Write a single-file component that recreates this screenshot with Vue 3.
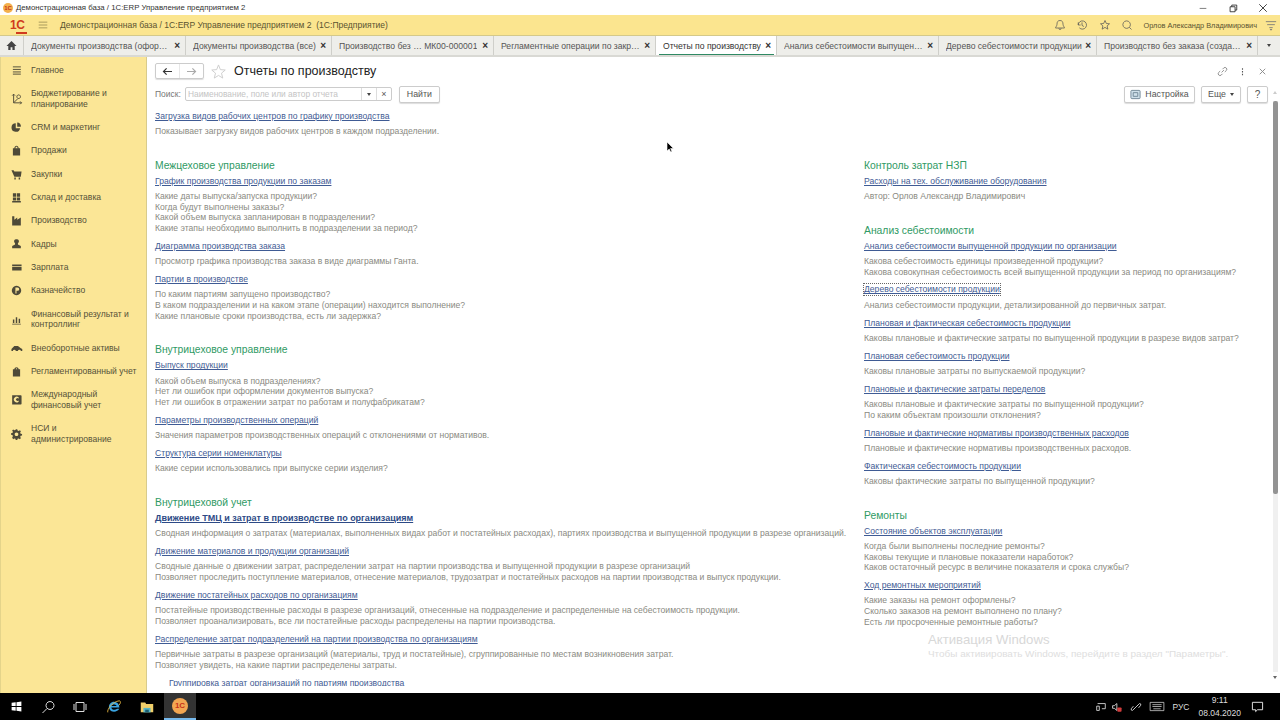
<script setup>
const tabs = [
  { t: 'Документы производства (офор…', w: 162 },
  { t: 'Документы производства (все)', w: 146 },
  { t: 'Производство без … МК00-000001', w: 162 },
  { t: 'Регламентные операции по закр…', w: 162 },
  { t: 'Отчеты по производству', w: 121, active: true },
  { t: 'Анализ себестоимости выпущен…', w: 162 },
  { t: 'Дерево себестоимости продукции', w: 158 },
  { t: 'Производство без заказа (созда…', w: 161 },
]
const menu = [
  { t: ['Главное'], i: 'M4 4h11M4 7.500h11M4 11h11M4 14h11', s: true },
  { t: ['Бюджетирование и', 'планирование'], i: 'M5 3v12h11M3 5l2-2 2 2M14 13l2 2-2 2M5 15l6-6M12 4a2.500 2.500 0 1 0 .01 0', s: true },
  { t: ['CRM и маркетинг'], i: 'M8 3a6 6 0 1 0 6 7H8zM10 2a5 5 0 0 1 5 6h-5z' },
  { t: ['Продажи'], i: 'M4 6h10v10H4zM6 6c0-5 6-5 6 0h-1.500c0-3-3-3-3 0z' },
  { t: ['Закупки'], i: 'M2 3h3l1 2h10l-1 7H6zM6 13h2v3H6zM12 13h2v3h-2z' },
  { t: ['Склад и доставка'], i: 'M4 3h4.500v5H4zM9.500 3H14v5H9.500zM4 9h4.500v4H4zM9.500 9H14v4H9.500zM3 14h12v2H3z' },
  { t: ['Производство'], i: 'M3 3h3v5l4-3v3l5-3v11H3z' },
  { t: ['Кадры'], i: 'M9 3a3 3 0 0 1 2 5.500v2l4 2v3H3v-3l4-2v-2A3 3 0 0 1 9 3z' },
  { t: ['Зарплата'], i: 'M3 5h13v2H3zM3 8h13v5H3z' },
  { t: ['Казначейство'], i: 'M9 2.500a6.500 6.500 0 1 0 .01 0zM7.500 5h3a2 2 0 0 1 0 4.500H9v3.500H7.500z' },
  { t: ['Финансовый результат и', 'контроллинг'], i: 'M4 9h2v5H4zM8 6h2v8H8zM12 8h2v6h-2zM3 15h12v1H3z' },
  { t: ['Внеоборотные активы'], i: 'M2 11l4-4h5l4 3 2 1v3h-2a2 2 0 0 0-4 0H8a2 2 0 0 0-4 0H2z' },
  { t: ['Регламентированный учет'], i: 'M6 6c0-4 6-4 6 0h2v10H4V6zM8 6h2c0-2-2-2-2 0z' },
  { t: ['Международный', 'финансовый учет'], i: 'M3 3h12a1 1 0 0 1 1 1v11a1 1 0 0 1-1 1H3zM12 6a4 4 0 1 0 0 6v-2a2 2 0 1 1 0-2z' },
  { t: ['НСИ и', 'администрирование'], i: 'M8 3h2l.5 2 1.500.6 1.700-1 1.400 1.400-1 1.700.6 1.500 2 .5v2l-2 .5-.6 1.500 1 1.700-1.400 1.400-1.700-1-1.500.6-.5 2H8l-.5-2-1.500-.6-1.700 1L3 14.400l1-1.700-.6-1.500-2-.5v-2l2-.5.6-1.500-1-1.700L4.400 3.600l1.700 1 1.500-.6zM9 7.500a2.500 2.500 0 1 0 .01 0z' },
]
const top = { l: 'Загрузка видов рабочих центров по графику производства', d: ['Показывает загрузку видов рабочих центров в каждом подразделении.'] }
const left = [
  { h: 'Межцеховое управление', items: [
    { l: 'График производства продукции по заказам', d: ['Какие даты выпуска/запуска продукции?', 'Когда будут выполнены заказы?', 'Какой объем выпуска запланирован в подразделении?', 'Какие этапы необходимо выполнить в подразделении за период?'] },
    { l: 'Диаграмма производства заказа', d: ['Просмотр графика производства заказа в виде диаграммы Ганта.'] },
    { l: 'Партии в производстве', d: ['По каким партиям запущено производство?', 'В каком подразделении и на каком этапе (операции) находится выполнение?', 'Какие плановые сроки производства, есть ли задержка?'] },
  ] },
  { h: 'Внутрицеховое управление', items: [
    { l: 'Выпуск продукции', d: ['Какой объем выпуска в подразделениях?', 'Нет ли ошибок при оформлении документов выпуска?', 'Нет ли ошибок в отражении затрат по работам и полуфабрикатам?'] },
    { l: 'Параметры производственных операций', d: ['Значения параметров производственных операций с отклонениями от нормативов.'] },
    { l: 'Структура серии номенклатуры', d: ['Какие серии использовались при выпуске серии изделия?'] },
  ] },
  { h: 'Внутрицеховой учет', items: [
    { l: 'Движение ТМЦ и затрат в производстве по организациям', bold: true, d: ['Сводная информация о затратах (материалах, выполненных видах работ и постатейных расходах), партиях производства и выпущенной продукции в разрезе организаций.'] },
    { l: 'Движение материалов и продукции организаций', d: ['Сводные данные о движении затрат, распределении затрат на партии производства и выпущенной продукции в разрезе организаций', 'Позволяет проследить поступление материалов, отнесение материалов, трудозатрат и постатейных расходов на партии производства и выпуск продукции.'] },
    { l: 'Движение постатейных расходов по организациям', d: ['Постатейные производственные расходы в разрезе организаций, отнесенные на подразделение и распределенные на себестоимость продукции.', 'Позволяет проанализировать, все ли постатейные расходы распределены на партии производства.'] },
    { l: 'Распределение затрат подразделений на партии производства по организациям', d: ['Первичные затраты в разрезе организаций (материалы, труд и постатейные), сгруппированные по местам возникновения затрат.', 'Позволяет увидеть, на какие партии распределены затраты.'] },
    { l: 'Группировка затрат организаций по партиям производства', sub: true, d: [] },
  ] },
]
const right = [
  { h: 'Контроль затрат НЗП', items: [
    { l: 'Расходы на тех. обслуживание оборудования', d: ['Автор: Орлов Александр Владимирович'] },
  ] },
  { h: 'Анализ себестоимости', items: [
    { l: 'Анализ себестоимости выпущенной продукции по организации', d: ['Какова себестоимость единицы произведенной продукции?', 'Какова совокупная себестоимость всей выпущенной продукции за период по организациям?'] },
    { l: 'Дерево себестоимости продукции', focus: true, d: ['Анализ себестоимости продукции, детализированной до первичных затрат.'] },
    { l: 'Плановая и фактическая себестоимость продукции', d: ['Каковы плановые и фактические затраты по выпущенной продукции в разрезе видов затрат?'] },
    { l: 'Плановая себестоимость продукции', d: ['Каковы плановые затраты по выпускаемой продукции?'] },
    { l: 'Плановые и фактические затраты переделов', d: ['Каковы плановые и фактические затраты по выпущенной продукции?', 'По каким объектам произошли отклонения?'] },
    { l: 'Плановые и фактические нормативы производственных расходов', d: ['Плановые и фактические нормативы производственных расходов.'] },
    { l: 'Фактическая себестоимость продукции', d: ['Каковы фактические затраты по выпущенной продукции?'] },
  ] },
  { h: 'Ремонты', items: [
    { l: 'Состояние объектов эксплуатации', d: ['Когда были выполнены последние ремонты?', 'Каковы текущие и плановые показатели наработок?', 'Каков остаточный ресурс в величине показателя и срока службы?'] },
    { l: 'Ход ремонтных мероприятий', d: ['Какие заказы на ремонт оформлены?', 'Сколько заказов на ремонт выполнено по плану?', 'Есть ли просроченные ремонтные работы?'] },
  ] },
]
</script>

<template>
  <div class="app">
    <header class="title">
      <span class="t-logo">1С</span>
      <span class="t-text">Демонстрационная база / 1С:ERP Управление предприятием 2</span>
      <span class="spring"></span>
      <svg class="win" viewBox="0 0 12 12"><path d="M2 6.500h8" stroke="#666" fill="none"/></svg>
      <svg class="win" viewBox="0 0 12 12"><path d="M2.500 4.500h6v6h-6zM4.500 4.500v-2h6v6h-2" stroke="#222" fill="none"/></svg>
      <svg class="win" viewBox="0 0 12 12"><path d="M1.500 1.500l9 9M10.500 1.500l-9 9" stroke="#222" fill="none"/></svg>
    </header>

    <div class="ybar">
      <span class="logo1c">1<i>С</i></span>
      <svg class="burger" viewBox="0 0 14 12"><path d="M1 2h12M1 6h12M1 10h12" stroke="#8a7f4a" stroke-width="1" fill="none"/></svg>
      <span class="y-text">Демонстрационная база / 1С:ERP Управление предприятием 2&nbsp; (1С:Предприятие)</span>
      <span class="spring"></span>
      <svg class="y-ic" viewBox="0 0 16 16"><path d="M8 2c-3 0-4 2-4 5 0 2-2 4-2 5h12c0-1-2-3-2-5 0-3-1-5-4-5zM6.500 12.500a1.500 1.500 0 0 0 3 0" stroke="#555" fill="none"/></svg>
      <svg class="y-ic" viewBox="0 0 16 16"><path d="M3 8a5.500 5.500 0 1 1 1.500 3.800M3 4.500V8h3.200M8 4.500V8.500l2.500 1.500" stroke="#555" fill="none"/></svg>
      <svg class="y-ic" viewBox="0 0 16 16"><path d="M8 2l1.800 4 4.200.4-3.200 2.800 1 4.300L8 11.200l-3.800 2.300 1-4.300L2 6.400 6.200 6z" stroke="#555" fill="none"/></svg>
      <svg class="y-ic srch" viewBox="0 0 16 16"><path d="M7.500 2.500a5 5 0 1 0 .01 0zM11 11l3 3" stroke="#555" fill="none"/></svg>
      <span class="y-user">Орлов Александр Владимирович</span>
      <svg class="y-menu" viewBox="0 0 14 12"><path d="M1 1.500h12M2.500 5h9M5 8.500h4" stroke="#777" fill="none"/><path d="M5.500 10h3L7 12z" fill="#777"/></svg>
    </div>

    <nav class="tabs">
      <div class="home">
        <svg viewBox="0 0 12 12"><path d="M6 1L.5 6.500H2.500V11h2.500V8h2v3h2.500V6.500h2z" fill="#444"/></svg>
      </div>
      <div v-for="tab in tabs" :key="tab.t" class="tab" :class="{ active: tab.active }" :style="{ width: tab.w + 'px' }">
        <span class="tab-t">{{ tab.t }}</span>
        <span class="tab-x">×</span>
      </div>
      <div class="tab-more"><i></i></div>
    </nav>

    <div class="body">
      <aside class="side">
        <div v-for="m in menu" :key="m.t[0]" class="mi" :class="{ two: m.t.length > 1 }">
          <svg class="mi-ic" viewBox="0 0 18 18">
            <path :d="m.i" :fill="m.s ? 'none' : '#4e4a38'" :stroke="m.s ? '#4e4a38' : 'none'" fill-rule="evenodd" :stroke-width="m.s ? 1.300 : 0" />
          </svg>
          <div class="mi-t">
            <div v-for="line in m.t" :key="line">{{ line }}</div>
          </div>
        </div>
      </aside>

      <main class="main">
        <div class="head">
          <div class="nav-btns">
            <span class="nb"><svg viewBox="0 0 12 10"><path d="M11 5H2M5 1.500L1.500 5 5 8.500" stroke="#333" stroke-width="1.300" fill="none"/></svg></span>
            <span class="nb"><svg viewBox="0 0 12 10"><path d="M1 5h9M7 1.500L10.500 5 7 8.500" stroke="#aaa" stroke-width="1.300" fill="none"/></svg></span>
          </div>
          <svg class="star" viewBox="0 0 16 16"><path d="M8 1l2 5 5.200.4-4 3.400 1.300 5.200L8 12.200 3.500 15l1.300-5.200-4-3.400L6 6z" stroke="#ccc" fill="none"/></svg>
          <h1>Отчеты по производству</h1>
          <span class="spring"></span>
          <svg class="h-ic" viewBox="0 0 12 12"><path d="M5 7l2.500-2.500M6 3.500l1.500-1.500a2 2 0 0 1 2.800 2.800L8.500 6.500M6 8.500L4.500 10A2 2 0 0 1 1.700 7.200L3.500 5.500" stroke="#888" fill="none"/></svg>
          <svg class="h-ic" viewBox="0 0 12 12"><path d="M6 2.500v1.500M6 5.500v1.500M6 8.500v1.500" stroke="#555" stroke-width="1.200" fill="none"/></svg>
          <svg class="h-ic" viewBox="0 0 12 12"><path d="M3 3l6 6M9 3l-6 6" stroke="#888" fill="none"/></svg>
        </div>

        <div class="search">
          <span class="s-label">Поиск:</span>
          <div class="s-box">
            <span class="s-ph">Наименование, поле или автор отчета</span>
            <span class="s-btn"><i class="arrow"></i></span>
            <span class="s-btn x">×</span>
          </div>
          <button class="btn find">Найти</button>
          <span class="spring"></span>
          <button class="btn nast">
            <svg viewBox="0 0 12 12"><rect x="1" y="1.500" width="10" height="9" rx="1" fill="#cfe0ea" stroke="#6e8494"/><path d="M3.500 4h5v4h-5z" fill="none" stroke="#6e8494"/></svg>
            Настройка
          </button>
          <button class="btn more">Еще <i class="arrow"></i></button>
          <button class="btn help">?</button>
        </div>

        <div class="scroll-wrap">
          <div class="content">
            <div class="item first">
              <a class="link">{{ top.l }}</a>
              <div class="desc"><div v-for="d in top.d" :key="d">{{ d }}</div></div>
            </div>
            <div class="cols">
              <div class="col">
                <section v-for="s in left" :key="s.h" class="sec">
                  <h2>{{ s.h }}</h2>
                  <div v-for="it in s.items" :key="it.l" class="item" :class="{ sub: it.sub }">
                    <a class="link" :class="{ bold: it.bold }">{{ it.l }}</a>
                    <div v-if="it.d.length" class="desc"><div v-for="d in it.d" :key="d">{{ d }}</div></div>
                  </div>
                </section>
              </div>
              <div class="col">
                <section v-for="s in right" :key="s.h" class="sec">
                  <h2>{{ s.h }}</h2>
                  <div v-for="it in s.items" :key="it.l" class="item">
                    <a class="link" :class="{ focus: it.focus }">{{ it.l }}</a>
                    <div class="desc"><div v-for="d in it.d" :key="d">{{ d }}</div></div>
                  </div>
                </section>
              </div>
            </div>
          </div>
          <div class="activate">
            <div class="a1">Активация Windows</div>
            <div class="a2">Чтобы активировать Windows, перейдите в раздел "Параметры".</div>
          </div>
        </div>

        <div class="sbar">
          <i class="sb-up"></i>
          <div class="sb-track"><i class="sb-thumb"></i></div>
          <i class="sb-down"></i>
        </div>
        <svg class="cursor" viewBox="0 0 8 12"><path d="M1 1v9l2.200-2 1.500 3 1.300-.6L4.600 7.500H7.500z" fill="#000" stroke="#fff" stroke-width=".6"/></svg>
      </main>
    </div>

    <footer class="task">
      <svg class="ti win-logo" viewBox="0 0 16 16"><path d="M2 3.500l5-.7v4.700H2zM8 2.700l6-.9v5.700H8zM2 8.500h5v4.700l-5-.7zM8 8.500h6v5.700l-6-.9z" fill="#fff"/></svg>
      <svg class="ti" viewBox="0 0 16 16"><path d="M10 2.500a4 4 0 1 0 .01 0zM7 9.500l-4.500 4.500" stroke="#ddd" fill="none"/></svg>
      <svg class="ti" viewBox="0 0 16 16"><path d="M4 3.500h8v9H4zM2 5v6M14 5v6" stroke="#ddd" fill="none"/></svg>
      <svg class="ti ie" viewBox="0 0 18 18"><path d="M9 3a6 6 0 0 1 6 6.500H6c.2 3 4.500 3.500 6.500 1.500H15c-2 4-10 5-11.500-1C2.500 6 6 3 9 3zM6 8h6c-.3-2.500-5.500-2.500-6 0z" fill="#3aa3e0" fill-rule="evenodd"/><path d="M2 15C1 12 7 3 15 2c2 .5 1.500 3-.5 5" stroke="#e8b840" fill="none"/></svg>
      <svg class="ti folder" viewBox="0 0 18 18"><path d="M2 4h5l1 1.500h8V15H2z" fill="#f1cf6a"/><path d="M5 10h8v5H5z" fill="#58b6c8"/><path d="M7 12h4v3H7z" fill="#1d5f72"/></svg>
      <div class="ti-active">
        <span class="od">1С</span>
      </div>
      <span class="spring"></span>
      <svg class="tr net" viewBox="0 0 14 14"><path d="M3 3h9v6H8M2 6h3v5H2z" stroke="#ddd" fill="none"/></svg>
      <svg class="tr vol" viewBox="0 0 14 14"><path d="M3 5.500h2L8 3v8L5 8.500H3z" stroke="#ddd" fill="none"/><rect x="8.500" y="7.500" width="5" height="5" rx="1" fill="#d23c3c"/></svg>
      <svg class="tr lnk" viewBox="0 0 14 14"><path d="M8 6l3-3a1.500 1.500 0 0 1 1.500 2L10 8M6 8l-3 3a1.500 1.500 0 0 1-1.500-2L4 6M5 9l4-4" stroke="#ddd" fill="none"/></svg>
      <svg class="tr kb" viewBox="0 0 16 12"><path d="M.5 1.500h15v9H.5zM3 4h10M3 6h10M4 8.500h8" stroke="#ddd" stroke-width=".8" fill="none"/></svg>
      <span class="lang">РУС</span>
      <div class="clock"><div>9:11</div><div>08.04.2020</div></div>
      <svg class="tr note" viewBox="0 0 14 14"><path d="M1.500 2.500h11v8H7L5 12.500V10.500H1.500z" stroke="#eee" fill="none"/></svg>
    </footer>
  </div>
</template>

<style>
html, body { margin: 0; background: #fff; overflow: hidden; }
</style>

<style scoped>
.app { width: 1280px; height: 720px; display: flex; flex-direction: column; overflow: hidden; font-family: "Liberation Sans", Arial, sans-serif; font-size: 9px; color: #444; background: #fff; }
.spring { flex: 1; }

.title { height: 15px; display: flex; align-items: center; padding-left: 3px; background: #fff; flex: none; }
.t-logo { width: 10px; height: 10px; margin-right: 3px; border-radius: 50%; background: #f3b04c; color: #c8321a; font-size: 6px; font-weight: 700; line-height: 10px; text-align: center; }
.t-text { font-size: 7.800px; color: #333; }
.win { width: 10px; height: 10px; margin-right: 20px; }
.win:last-child { margin-right: 12px; }

.ybar { height: 21px; flex: none; background: #fbe58f; display: flex; align-items: center; border-bottom: 1px solid #d4c98a; box-sizing: border-box; }
.logo1c { font-size: 12px; font-weight: 700; color: #d03a1e; margin-left: 10px; width: 19px; letter-spacing: -.5px; }
.logo1c i { font-style: normal; border-bottom: 2px solid #d03a1e; padding-right: 3px; }
.burger { width: 10px; height: 10px; margin-left: 9px; }
.y-text { margin-left: 12px; font-size: 8.550px; color: #5a5330; }
.y-ic { width: 12px; height: 12px; margin-right: 10.500px; }
.y-ic.srch { margin-right: 10px; }
.y-user { font-size: 7.350px; color: #5a5330; margin-right: 8px; }
.y-menu { width: 12px; height: 11px; margin-right: 3px; }

.tabs { height: 21px; flex: none; background: #eeeeea; display: flex; border-bottom: 2px solid #d9d9d4; box-sizing: border-box; }
.home { width: 24px; display: flex; align-items: center; justify-content: center; border-right: 1px solid #cfcfca; box-sizing: border-box; }
.home svg { width: 11px; height: 11px; }
.tab { flex: none; box-sizing: border-box; border-right: 1px solid #cfcfca; display: flex; align-items: center; padding: 0 5px 0 7px; justify-content: space-between; position: relative; }
.tab-t { font-size: 8.600px; color: #555; white-space: nowrap; overflow: hidden; }
.tab-x { font-size: 10px; color: #333; font-weight: 700; line-height: 1; }
.tab.active { background: #fff; }
.tab.active::after { content: ""; position: absolute; left: 3px; right: 2px; bottom: 0; height: 1.500px; background: #2f8a64; }
.tab.active .tab-t { color: #333; }
.tab-more { flex: 1; display: flex; align-items: center; justify-content: center; }
.arrow, .tab-more i { display: inline-block; width: 0; height: 0; border-left: 2.500px solid transparent; border-right: 2.500px solid transparent; border-top: 3px solid #444; }

.body { flex: 1; min-height: 0; display: flex; }
.side { width: 147px; flex: none; box-sizing: border-box; background: #fbe696; border-left: 1px solid #e4d48a; border-right: 1px solid #d8cb8c; padding-top: 1.500px; }
.mi { display: flex; align-items: center; height: 23.300px; }
.mi.two { height: 34px; }
.mi-ic { width: 13px; height: 13px; margin-left: 9px; margin-right: 8px; flex: none; }
.mi-t { font-size: 8.550px; line-height: 10.500px; color: #555138; }

.main { flex: 1; min-width: 0; display: flex; flex-direction: column; position: relative; }
.head { height: 28px; display: flex; align-items: center; padding: 0 12px 0 8px; flex: none; }
.nav-btns { display: flex; width: 49px; height: 16px; border: 1px solid #ccc; border-radius: 2px; box-sizing: border-box; box-shadow: 0 1px 1px #ddd; }
.nb { flex: 1; display: flex; align-items: center; justify-content: center; }
.nb + .nb { border-left: 1px solid #e8e8e8; }
.nb svg { width: 11px; height: 9px; }
.star { width: 15px; height: 15px; margin: 0 8px 0 7px; }
h1 { margin: 0; font-size: 12.500px; font-weight: 400; color: #222; }
.h-ic { width: 11px; height: 11px; margin-left: 9px; }

.search { height: 18px; display: flex; align-items: center; flex: none; padding: 0 12px 0 8px; }
.s-label { font-size: 8.500px; color: #777; margin-right: 4px; }
.s-box { width: 207px; height: 14px; border: 1px solid #ccc; border-radius: 2px; box-sizing: border-box; display: flex; align-items: center; }
.s-ph { flex: 1; font-size: 8.400px; color: #c4c4c4; padding-left: 2px; white-space: nowrap; }
.s-btn { width: 14px; height: 12px; display: flex; align-items: center; justify-content: center; border-left: 1px solid #ddd; font-size: 9px; color: #555; }
.btn { font-family: inherit; background: #fff; border: 1px solid #ccc; border-radius: 2px; height: 17px; padding: 0; box-shadow: 0 1px 1px #ddd; font-size: 8.800px; color: #555; display: flex; align-items: center; justify-content: center; }
.find { width: 41px; margin-left: 7px; }
.nast { width: 71px; gap: 4px; }
.nast svg { width: 11px; height: 11px; }
.more { width: 40px; margin-left: 6px; gap: 4px; }
.help { width: 21px; margin-left: 6px; font-size: 10px; }

.scroll-wrap { height: 583px; overflow: hidden; position: relative; flex: none; }
.content { padding: 4px 0 0 8px; }
.cols { display: flex; }
.col { width: 709px; flex: none; }
.col + .col { width: 400px; }
.sec { margin-top: 22.850px; }
h2 { margin: 0; font-size: 10.350px; line-height: 12px; font-weight: 400; color: #2f9a64; }
.item { margin-top: 4px; }
.item + .item { margin-top: 7.200px; }
.item.sub { padding-left: 14px; }
.link { display: inline-block; font-size: 8.600px; line-height: 11px; color: #3f5b94; text-decoration: underline; text-decoration-thickness: 1px; white-space: nowrap; }
.link.bold { font-size: 9px; font-weight: 700; color: #2d4a86; }
.link.focus { outline: 1px dotted #666; }
.desc { margin-top: 4.250px; font-size: 8.600px; line-height: 10.700px; color: #8a8a82; white-space: nowrap; }

.activate { position: absolute; left: 781px; top: 528.500px; white-space: nowrap; pointer-events: none; }
.a1 { font-size: 13.200px; color: #d8d8d8; line-height: 16px; }
.a2 { font-size: 9.950px; color: #dedede; line-height: 14px; margin-top: -1px; }

.sbar { position: absolute; right: 0; top: 34px; bottom: 14px; width: 10px; display: flex; flex-direction: column; align-items: center; }
.sb-up { width: 0; height: 0; border-left: 2px solid transparent; border-right: 2px solid transparent; border-bottom: 3px solid #ccc; }
.sb-track { flex: 1; width: 5px; background: #f0f0f0; margin: 7px 0 4px; }
.sb-thumb { display: block; width: 5px; height: 393px; background: #939393; border-radius: 2px; }
.sb-down { width: 0; height: 0; border-left: 2px solid transparent; border-right: 2px solid transparent; border-top: 3px solid #666; }
.cursor { position: absolute; left: 519px; top: 84px; width: 8px; height: 12px; }

.task { height: 27px; flex: none; background: #000; display: flex; align-items: center; color: #ddd; }
.ti { width: 16px; height: 16px; margin: 0 8px; }
.win-logo { width: 13px; height: 13px; margin: 0 9.500px; }
.ie { margin: 0 8px 0 10px; }
.folder { margin: 0 9px; }
.ti-active { width: 32px; height: 27px; background: #333; border-bottom: 2px solid #76b9ed; box-sizing: border-box; display: flex; align-items: center; justify-content: center; }
.od { width: 16px; height: 16px; border-radius: 50%; background: #f3a652; color: #c8321a; font-size: 8px; font-weight: 700; display: flex; align-items: center; justify-content: center; }
.tr { width: 12px; height: 12px; margin-right: 7px; }
.net { margin-right: 3px; }
.vol { margin-right: 8px; }
.kb { width: 16px; height: 11px; }
.lang { font-size: 8.500px; margin-right: 9px; }
.clock { font-size: 8.500px; text-align: center; line-height: 13px; margin-right: 9.500px; }
.note { width: 13px; height: 13px; margin-right: 16.500px; }
</style>
